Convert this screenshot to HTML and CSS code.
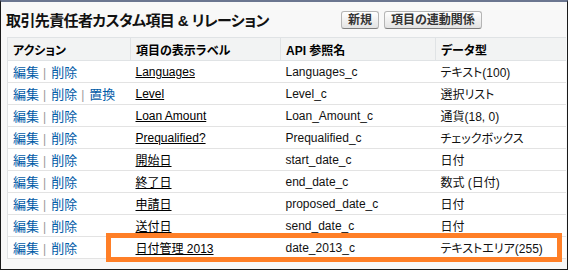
FILE: index.html
```html
<!DOCTYPE html>
<html lang="ja">
<head>
    <meta charset="UTF-8">
    <meta name="viewport" content="width=device-width, initial-scale=1.0">
    <title>取引先責任者カスタム項目 &amp; リレーション</title>
    <link rel="stylesheet" href="styles.css">
</head>
<body>
    <div class="frame">
        <div class="pb-header">
            <h2 class="pb-title">取引先責任者カスタム項目 &amp; リレーション</h2>
            <div class="pb-buttons">
                <button class="btn">新規</button>
                <button class="btn">項目の連動関係</button>
            </div>
        </div>

        <table class="list">
            <colgroup>
                <col class="col-action">
                <col class="col-label">
                <col class="col-api">
                <col>
            </colgroup>
            <tr>
                <th>アクション</th>
                <th>項目の表示ラベル</th>
                <th>API 参照名</th>
                <th>データ型</th>
            </tr>
            <tr>
                <td><a class="act">編集</a><span class="sep">|</span><a class="act">削除</a></td>
                <td><a class="label">Languages</a></td>
                <td>Languages_c</td>
                <td>テキスト(100)</td>
            </tr>
            <tr>
                <td><a class="act">編集</a><span class="sep">|</span><a class="act">削除</a><span class="sep">|</span><a class="act">置換</a></td>
                <td><a class="label">Level</a></td>
                <td>Level_c</td>
                <td>選択リスト</td>
            </tr>
            <tr>
                <td><a class="act">編集</a><span class="sep">|</span><a class="act">削除</a></td>
                <td><a class="label">Loan Amount</a></td>
                <td>Loan_Amount_c</td>
                <td>通貨(18, 0)</td>
            </tr>
            <tr>
                <td><a class="act">編集</a><span class="sep">|</span><a class="act">削除</a></td>
                <td><a class="label">Prequalified?</a></td>
                <td>Prequalified_c</td>
                <td>チェックボックス</td>
            </tr>
            <tr>
                <td><a class="act">編集</a><span class="sep">|</span><a class="act">削除</a></td>
                <td><a class="label">開始日</a></td>
                <td>start_date_c</td>
                <td>日付</td>
            </tr>
            <tr>
                <td><a class="act">編集</a><span class="sep">|</span><a class="act">削除</a></td>
                <td><a class="label">終了日</a></td>
                <td>end_date_c</td>
                <td>数式 (日付)</td>
            </tr>
            <tr>
                <td><a class="act">編集</a><span class="sep">|</span><a class="act">削除</a></td>
                <td><a class="label">申請日</a></td>
                <td>proposed_date_c</td>
                <td>日付</td>
            </tr>
            <tr>
                <td><a class="act">編集</a><span class="sep">|</span><a class="act">削除</a></td>
                <td><a class="label">送付日</a></td>
                <td>send_date_c</td>
                <td>日付</td>
            </tr>
            <tr>
                <td><a class="act">編集</a><span class="sep">|</span><a class="act">削除</a></td>
                <td><a class="label">日付管理 2013</a></td>
                <td>date_2013_c</td>
                <td>テキストエリア(255)</td>
            </tr>
        </table>

        <div class="highlight"></div>
    </div>
</body>
</html>
```

FILE: styles.css
```css
body {
    margin: 0;
    font-family: "Liberation Sans", "Noto Sans CJK JP", sans-serif;
    color: #000;
}
.frame {
    position: relative;
    width: 568px;
    height: 270px;
    box-sizing: border-box;
    border: 1px solid #1a1a1a;
    border-top: 2px solid #6b7690;
    background-color: #f8f8f8;
}
.pb-header {
    display: flex;
    align-items: center;
    height: 35px;
    padding-left: 5px;
}
.pb-title {
    width: 335px;
    margin: 0;
    font-size: 15px;
    font-weight: bold;
    letter-spacing: -0.6px;
    color: #111;
    font-feature-settings: "palt";
    white-space: nowrap;
}
.pb-buttons {
    display: flex;
    gap: 5px;
}
.btn {
    height: 18px;
    padding: 0 6px;
    border: 1px solid #b5b5b5;
    border-bottom-color: #7f7f7f;
    border-radius: 3px;
    background: linear-gradient(#ffffff, #e3e3e3);
    font-family: "Liberation Sans", "Noto Sans CJK JP", sans-serif;
    font-size: 12px;
    font-weight: bold;
    line-height: 16px;
    color: #333;
    font-feature-settings: "palt";
}
.list {
    margin-left: 6px;
    width: 559px;
    border-collapse: collapse;
    table-layout: fixed;
    background-color: #fff;
    font-size: 12px;
    font-feature-settings: "palt";
    border-left: 1px solid #e0e3e5;
}
.col-action {
    width: 123px;
}
.col-label {
    width: 150px;
}
.col-api {
    width: 155px;
}
th {
    height: 22px;
    padding: 0 5px;
    text-align: left;
    font-weight: bold;
    background-color: #f2f3f3;
    border-top: 1px solid #e0e3e5;
    border-bottom: 1px solid #e0e3e5;
    border-left: 1px solid #e0e3e5;
}
td {
    height: 21px;
    padding: 0 5px;
    border-bottom: 1px solid #e3e3e3;
    white-space: nowrap;
    color: #111;
}
.act {
    color: #015ba7;
    font-size: 13px;
}
.sep {
    color: #999;
    margin: 0 5px 0 4px;
}
.label {
    color: #000;
    text-decoration: underline;
}
.highlight {
    position: absolute;
    left: 105px;
    top: 231px;
    width: 456px;
    height: 29px;
    box-sizing: border-box;
    border: 5px solid #ff7f27;
}
```
